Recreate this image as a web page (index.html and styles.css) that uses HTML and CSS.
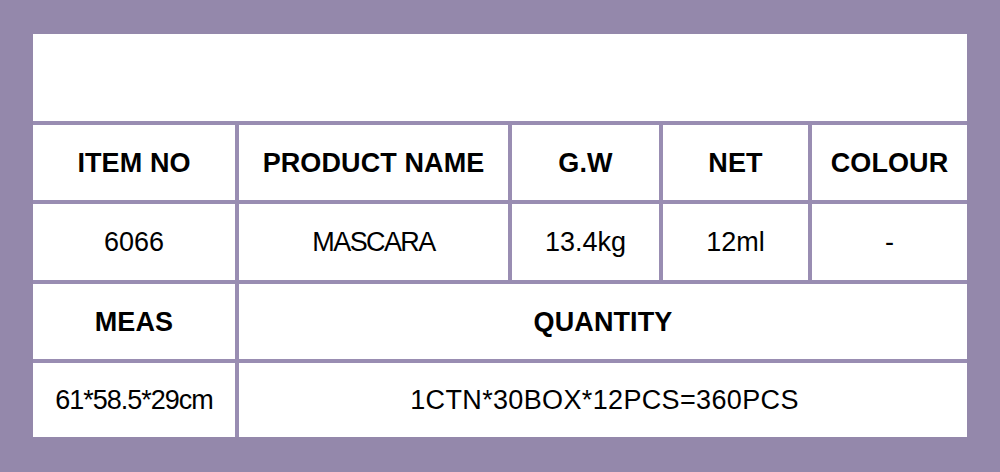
FILE: index.html
```html
<!DOCTYPE html>
<html lang="en">
<head>
<meta charset="utf-8">
<title>Packing info</title>
<link rel="stylesheet" href="styles.css">
</head>
<body>
<div class="sheet">
  <div class="banner"></div>
  <div class="cell head">ITEM NO</div>
  <div class="cell head">PRODUCT NAME</div>
  <div class="cell head">G.W</div>
  <div class="cell head">NET</div>
  <div class="cell head">COLOUR</div>
  <div class="cell">6066</div>
  <div class="cell tight-2">MASCARA</div>
  <div class="cell">13.4kg</div>
  <div class="cell">12ml</div>
  <div class="cell">-</div>
  <div class="cell head">MEAS</div>
  <div class="cell head wide">QUANTITY</div>
  <div class="cell tight-1">61*58.5*29cm</div>
  <div class="cell wide loose">1CTN*30BOX*12PCS=360PCS</div>
</div>
</body>
</html>
```

FILE: styles.css
```css
html, body {
  margin: 0;
  padding: 0;
}
body {
  background: #9488ab;
  width: 1000px;
  height: 472px;
  overflow: hidden;
  font-family: "Liberation Sans", Arial, sans-serif;
  color: #000;
}
.sheet {
  margin: 34px 33px 0 33px;
  width: 934px;
  display: grid;
  grid-template-columns: 202px 269px 147px 145px 155px;
  grid-template-rows: 87px 75px 76px 75px 74px;
  gap: 4px;
  background: #998db2;
}
.banner {
  grid-column: 1 / -1;
  background: #fff;
}
.cell {
  background: #fff;
  display: flex;
  align-items: center;
  justify-content: center;
  font-size: 27px;
  line-height: 1;
  white-space: nowrap;
  padding-top: 1px;
}
.head {
  font-weight: bold;
  letter-spacing: 0.1px;
}
.wide {
  grid-column: 2 / -1;
}
.tight-1 {
  letter-spacing: -1px;
}
.tight-2 {
  letter-spacing: -1.6px;
}
.loose {
  letter-spacing: 0.35px;
  padding-left: 3px;
}
```
